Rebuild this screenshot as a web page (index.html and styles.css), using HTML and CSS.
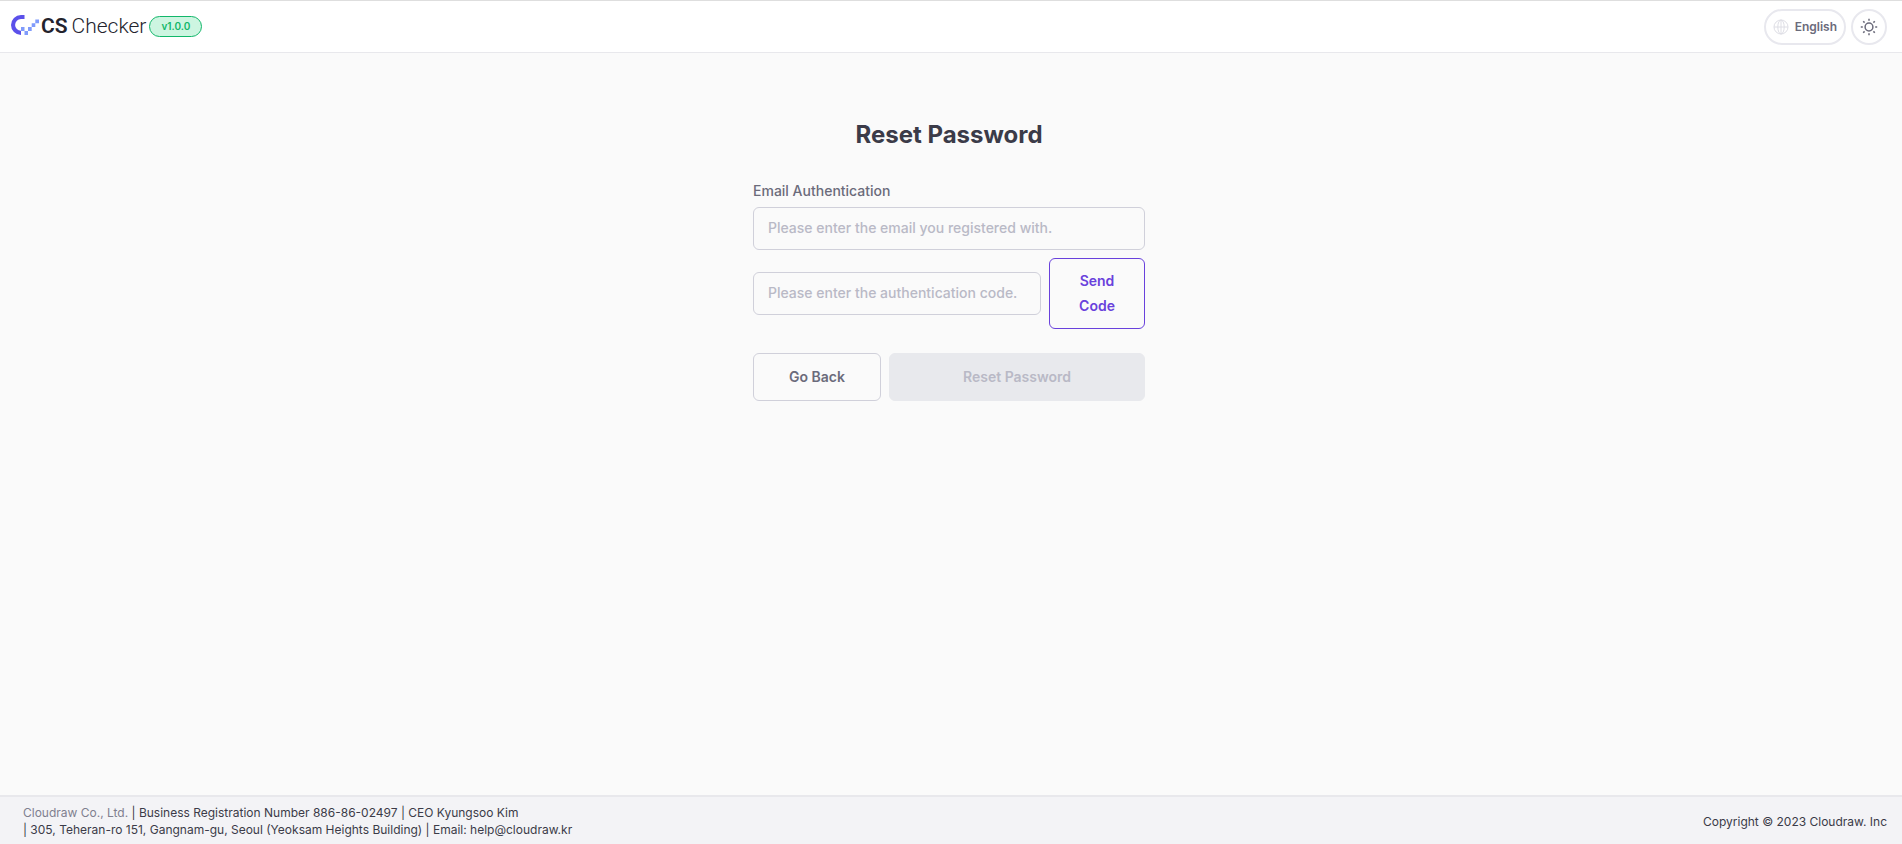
FILE: index.html
```html
<!DOCTYPE html>
<html lang="en">
<head>
<meta charset="utf-8">
<title>CS Checker - Reset Password</title>
<link rel="stylesheet" href="styles.css">
</head>
<body>
<header class="header">
  <a class="brand" href="#">
    <svg class="brand-mark" width="28" height="20" viewBox="0 0 28 20" aria-hidden="true">
      <path d="M13.5 0H10a10 10 0 0 0 0 20V15.8a5.9 5.9 0 0 1 0-11.8h3.5z" fill="#5b50ea"/>
      <path d="M10 12h3.5v4H17v4h-3.5v-4H10zM17 12h3.700v4H17zM20.700 8.300h3.600V12h-3.600zM24.300 4.600H28v3.700h-3.700z" fill="#809bfb"/>
    </svg>
    <span class="brand-name"><strong>CS</strong> <span>Checker</span></span>
  </a>
  <span class="version">v1.0.0</span>
  <div class="tools">
    <button class="tool" type="button">
      <svg width="16" height="16" viewBox="0 0 16 16" fill="none" stroke="#dedee5" aria-hidden="true">
        <circle cx="8" cy="8" r="7"/><ellipse cx="8" cy="8" rx="3.200" ry="7"/><path d="M8 1v14M1 8h14"/>
      </svg>
      English
    </button>
    <button class="tool tool-round" type="button" aria-label="Toggle theme">
      <svg width="18" height="18" viewBox="0 0 18 18" fill="none" stroke="#6b6b7b" stroke-width="1.500" aria-hidden="true">
        <circle cx="9" cy="9" r="3.900"/>
        <path d="M9 .8v2M9 15.200v2M.8 9h2M15.200 9h2M3.200 3.200l1.400 1.400M13.400 13.400l1.400 1.400M3.200 14.800l1.400-1.400M13.400 4.600l1.400-1.400"/>
      </svg>
    </button>
  </div>
</header>
<main class="main">
  <form class="form">
    <h1 class="title">Reset Password</h1>
    <label class="label" for="email">Email Authentication</label>
    <input class="input" id="email" type="email" placeholder="Please enter the email you registered with.">
    <div class="row code-row">
      <input class="input" type="text" aria-label="Authentication code" placeholder="Please enter the authentication code.">
      <button class="btn btn-send" type="button">Send Code</button>
    </div>
    <div class="actions">
      <button class="btn" type="button">Go Back</button>
      <button class="btn btn-reset" type="submit" disabled>Reset Password</button>
    </div>
  </form>
</main>
<footer class="footer">
  <p class="company"><span class="company-name">Cloudraw Co., Ltd.</span> | Business Registration Number 886-86-02497 | CEO Kyungsoo Kim<br>| 305, Teheran-ro 151, Gangnam-gu, Seoul (Yeoksam Heights Building) | Email: help@cloudraw.kr</p>
  <p class="copyright">Copyright © 2023 Cloudraw. Inc</p>
</footer>
</body>
</html>
```
FILE: styles.css
```css
* { box-sizing: border-box; }

body {
  margin: 0;
  min-height: 100vh;
  display: flex;
  flex-direction: column;
  background: #fafafa;
  color: #3b3b48;
  font-family: Inter, "Noto Sans", sans-serif;
  font-size: 14px;
}

button, input { font: inherit; }

.header {
  display: flex;
  align-items: center;
  height: 53px;
  padding: 0 15px 0 11px;
  background: #fff;
  border-top: 1px solid #dedede;
  border-bottom: 1px solid #e8e8ec;
}

.brand {
  display: flex;
  align-items: center;
  gap: 2px;
  padding-bottom: 4px;
  color: #23232d;
  text-decoration: none;
}

.brand-name {
  display: flex;
  gap: 4px;
  padding-top: 2px;
  font-family: Roboto, Inter, sans-serif;
  font-size: 21px;
  line-height: 24px;
  font-weight: 300;
}

.brand-name strong { font-weight: 600; }

.version {
  margin-left: 3px;
  padding: 0 11px;
  border: 1px solid #12b76a;
  border-radius: 11px;
  background: #cdf5e1;
  color: #12b76a;
  font-size: 10px;
  line-height: 19px;
  font-weight: 600;
}

.tools {
  display: flex;
  gap: 5px;
  margin-left: auto;
}

.tool {
  display: flex;
  align-items: center;
  justify-content: center;
  gap: 6px;
  height: 36px;
  padding: 0 7px;
  border: 2px solid #e8e8ee;
  border-radius: 18px;
  background: #fff;
  color: #6b6b7b;
  font-size: 12px;
  font-weight: 600;
}

.tool-round {
  width: 36px;
  padding: 0;
}

.main {
  flex: 1;
  padding: 64px 20px 32px 16px;
}

.form {
  max-width: 392px;
  margin: 0 auto;
}

.title {
  margin: 0 0 28px;
  color: #3b3b48;
  font-size: 24px;
  line-height: 36px;
  font-weight: 700;
  text-align: center;
}

.label {
  display: block;
  margin-bottom: 6px;
  color: #6b6b7b;
  font-weight: 500;
  line-height: 20px;
}

.input {
  display: block;
  width: 100%;
  min-width: 0;
  height: 43px;
  padding: 0 14px 2px;
  border: 1px solid #d0d0da;
  border-radius: 6px;
  background: #fafafa;
  color: #3b3b48;
  font-weight: 500;
}

.input::placeholder { color: #b9b9c6; }

.row {
  display: flex;
  align-items: center;
  gap: 8px;
}

.code-row { margin-top: 8px; }

.btn {
  min-height: 48px;
  padding: 8px 24px 10px;
  border: 1px solid #d0d0da;
  border-radius: 6px;
  background: #fafafa;
  color: #6b6b7b;
  font-weight: 600;
  line-height: 25px;
}

.btn-send {
  flex: 0 0 96px;
  min-height: 71px;
  border-color: #6941dc;
  color: #6941dc;
}

.actions {
  display: grid;
  grid-template-columns: 1fr 2fr;
  gap: 8px;
  margin-top: 24px;
}

.btn-reset {
  border-color: #e8e9ed;
  background: #e8e9ed;
  color: #b9b9c6;
}

.footer {
  display: flex;
  align-items: center;
  justify-content: space-between;
  padding: 7px 15px 6px 23px;
  border-top: 2px solid #e8e8ec;
  background: #f3f3f6;
  font-size: 12px;
  line-height: 17px;
}

.footer p { margin: 0; }

.company-name { color: #7f7f8f; }
```
